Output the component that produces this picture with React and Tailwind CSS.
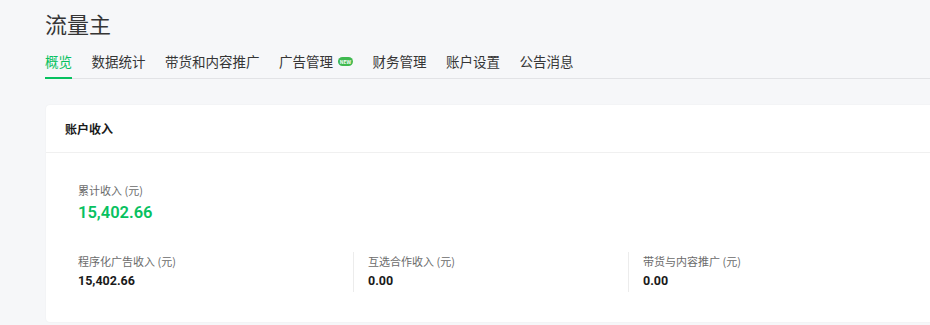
export default function App() {
  const tabs = ['概览', '数据统计', '带货和内容推广', '广告管理', '财务管理', '账户设置', '公告消息'];

  const incomes = [
    { label: '程序化广告收入 (元)', value: '15,402.66' },
    { label: '互选合作收入 (元)', value: '0.00' },
    { label: '带货与内容推广 (元)', value: '0.00' },
  ];

  const num = { fontFamily: 'Roboto, "Noto Sans", sans-serif' };

  return (
    <div
      className="w-[930px] h-[325px] overflow-hidden bg-[#f6f7f9] text-[#333]"
      style={{ fontFamily: '"Noto Sans CJK SC", "Noto Sans", sans-serif' }}
    >
      <div className="w-[1200px] pl-[45px]">
        {/* Title */}
        <h1 className="pt-[6px] text-[22px] leading-[34px] font-normal text-[#353535]">流量主</h1>

        {/* Tabs */}
        <div className="mt-[10px] flex items-end gap-[19.5px] border-b border-[#e2e3e6]">
          {tabs.map((tab, i) => (
            <div
              key={tab}
              className={`relative flex items-center pb-[6px] text-[13.5px] leading-[22px] ${
                i === 0 ? 'text-[#07c160]' : 'text-[#353535]'
              }`}
            >
              {tab}
              {tab === '广告管理' && (
                <span className="ml-[5px] flex h-[9px] w-[15px] items-center justify-center rounded-full bg-[#3fb950] text-[5px] font-bold leading-none text-white">
                  NEW
                </span>
              )}
              {i === 0 && <span className="absolute left-0 right-0 -bottom-px h-[2px] bg-[#07c160]" />}
            </div>
          ))}
        </div>

        {/* Card */}
        <div className="mt-[26px] ml-px rounded-[4px] bg-white shadow-[0_0_2px_rgba(0,0,0,0.06)]">
          <div className="flex h-[48px] items-center border-b border-[#f0f0f0] px-[19px]">
            <h2 className="text-[12px] font-bold text-[#1a1a1a]">账户收入</h2>
          </div>

          <div className="pl-[32px] pt-[28px] pb-[30px]">
            <p className="text-[11px] leading-[18px] text-[#6b6b6b]">累计收入 (元)</p>
            <p className="mt-[3px] text-[16.5px] font-semibold leading-[22px] text-[#07c160]" style={num}>
              15,402.66
            </p>

            <div className="mt-[28px] flex">
              {incomes.map((item, i) => (
                <div
                  key={item.label}
                  className={`w-[275px] pt-px pb-[2px] ${i > 0 ? 'border-l border-[#ececec] pl-[14px]' : ''}`}
                >
                  <p className="text-[11px] leading-[16px] text-[#6b6b6b]">{item.label}</p>
                  <p className="mt-[3px] text-[12.5px] font-bold leading-[18px] text-[#1a1a1a]" style={num}>
                    {item.value}
                  </p>
                </div>
              ))}
            </div>
          </div>
        </div>
      </div>
    </div>
  );
}
